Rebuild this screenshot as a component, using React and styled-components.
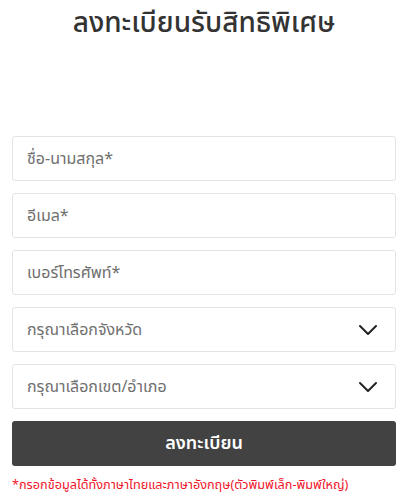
import React from 'react';
import styled, { createGlobalStyle } from 'styled-components';

const GlobalStyle = createGlobalStyle`
    body{
        margin: 0;
        background: #fff;
        font-family: "Noto Sans Thai", "Noto Sans", "Liberation Sans", sans-serif;
    }
`;

function Chevron() {
    return (
        <svg width="20" height="12" viewBox="0 0 20 12" fill="none">
            <path d="M2 2 L10 10 L18 2" stroke="#222" strokeWidth="2" strokeLinecap="round" strokeLinejoin="round"/>
        </svg>
    )
}

function App() {
    return (
        <FormStyled>
            <GlobalStyle />
            <h1 className="title">ลงทะเบียนรับสิทธิพิเศษ</h1>
            <div className="fields">
                <Field><input placeholder="ชื่อ-นามสกุล*"/></Field>
                <Field><input placeholder="อีเมล*"/></Field>
                <Field><input placeholder="เบอร์โทรศัพท์*"/></Field>
                <Field $select>
                    <span>กรุณาเลือกจังหวัด</span>
                    <Chevron/>
                </Field>
                <Field $select>
                    <span>กรุณาเลือกเขต/อำเภอ</span>
                    <Chevron/>
                </Field>
                <SubmitButton>ลงทะเบียน</SubmitButton>
            </div>
            <p className="note">*กรอกข้อมูลได้ทั้งภาษาไทยและภาษาอังกฤษ(ตัวพิมพ์เล็ก-พิมพ์ใหญ่)</p>
        </FormStyled>
    )
}

const FormStyled = styled.div`
    width: 407px;
    height: 500px;
    box-sizing: border-box;
    padding: 0 11px 0 12px;
    .title{
        margin: 0;
        height: 48px;
        line-height: 48px;
        text-align: center;
        font-size: 28px;
        font-weight: 500;
        color: #333;
    }
    .fields{
        margin-top: 88px;
        display: flex;
        flex-direction: column;
        gap: 12px;
    }
    .note{
        margin: 10px 0 0;
        font-size: 12.7px;
        color: #f0152a;
    }
`;

const Field = styled.label`
    display: flex;
    align-items: center;
    justify-content: space-between;
    height: 45px;
    box-sizing: border-box;
    padding: 0 17px 0 14px;
    border: 1px solid #e3e3e3;
    border-radius: 3px;
    background: #fff;
    color: #6f6f6f;
    font-size: 16px;
    input{
        border: none;
        outline: none;
        width: 100%;
        padding: 0;
        font: inherit;
        color: #333;
        background: transparent;
        &::placeholder{
            color: #6f6f6f;
        }
    }
`;

const SubmitButton = styled.button`
    height: 45px;
    border: none;
    border-radius: 3px;
    background: #424242;
    color: #fff;
    font-family: inherit;
    font-size: 18px;
    font-weight: 600;
`;

export default App;
